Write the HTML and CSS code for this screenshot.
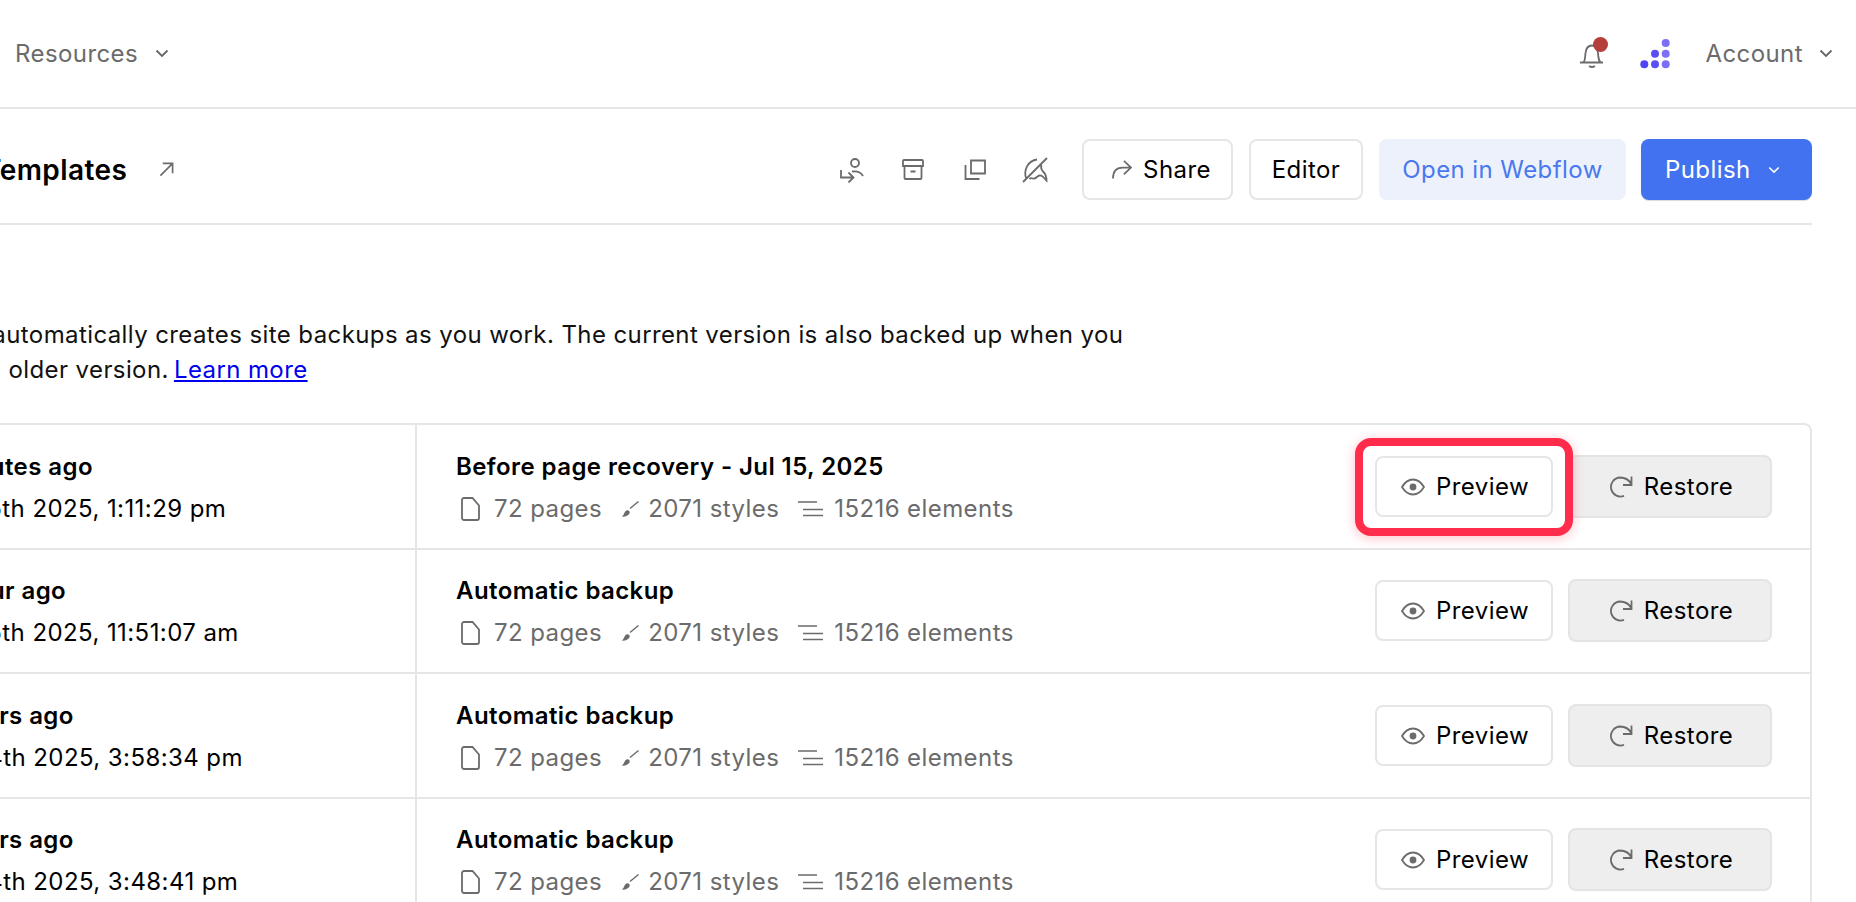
FILE: index.html
```html
<!DOCTYPE html>
<html lang="en">
<head>
<meta charset="utf-8">
<title>Site backups</title>
<link rel="stylesheet" href="styles.css">
</head>
<body>
<svg class="defs" width="0" height="0" aria-hidden="true">
  <symbol id="i-eye" viewBox="0 0 24 18"><path d="M1 9C4 4 8 1.500 12 1.500S20 4 23 9c-3 5-7 7.500-11 7.500S4 14 1 9Z" fill="none" stroke="currentColor" stroke-width="1.800"/><circle cx="12" cy="9" r="3.400" fill="currentColor"/></symbol>
  <symbol id="i-restore" viewBox="0 0 24 22"><path d="M22.500 8.500C20 3.500 15.500 1.500 11 1.500A9.500 9.500 0 1 0 15 19.800M22.500 0.500V9H14" fill="none" stroke="currentColor" stroke-width="1.800"/></symbol>
  <symbol id="i-doc" viewBox="0 0 19 24"><path d="M1 3A2 2 0 0 1 3 1H11.500L18 8.500V21A2 2 0 0 1 16 23H3A2 2 0 0 1 1 21Z" fill="none" stroke="currentColor" stroke-width="1.800"/></symbol>
  <symbol id="i-brush" viewBox="0 0 18 16"><path d="M9 7.500 17.500 0.500" fill="none" stroke="currentColor" stroke-width="1.400"/><path d="M0.500 15.500C3 15 3 10.500 5.500 9.500 7.500 8.800 9.500 10.500 8.500 12.500 7.300 15 3.500 16 0.500 15.500Z" fill="currentColor"/></symbol>
  <symbol id="i-lines" viewBox="0 0 25 16"><path d="M0 1H19M5 8.500H25M5 14.500H25" fill="none" stroke="currentColor" stroke-width="1.500"/></symbol>
  <symbol id="i-chev" viewBox="0 0 14 9"><path d="M1.500 1.500 7 7l5.500-5.500" fill="none" stroke="currentColor" stroke-width="1.800"/></symbol>
</svg>

<header class="topbar">
  <nav class="topnav"><span class="navtext">Resources</span><svg class="chev"><use href="#i-chev"/></svg></nav>
  <div class="topright">
    <span class="bell">
      <svg class="bell-svg" viewBox="0 0 26 26"><path d="M1 20.500H24M4.500 20.500C6.500 18 6 15 6.500 11 7 6.500 9.500 3.500 13 3.500 16.500 3.500 18.500 6.500 19 11 19.500 15 19 18 21.500 20.500M10 24Q13 26 16 24" fill="none" stroke="currentColor" stroke-width="1.800"/></svg>
      <span class="bell-dot"></span>
    </span>
    <svg class="logo" viewBox="0 0 30 30"><circle cx="4.300" cy="25.300" r="4" fill="#4f45f2"/><circle cx="15" cy="25.300" r="4" fill="#5a4ff5"/><circle cx="25.700" cy="25.300" r="4" fill="#7b70f5"/><circle cx="15" cy="14.700" r="4" fill="#5a4ff5"/><circle cx="25.700" cy="14.700" r="4" fill="#7b70f5"/><circle cx="25.700" cy="4" r="4" fill="#7b70f5"/></svg>
    <span class="navtext account">Account</span>
    <svg class="chev"><use href="#i-chev"/></svg>
  </div>
</header>

<main class="main">
  <section class="subhead">
    <div class="crumb">
      <h1 class="title">Templates</h1>
      <svg class="ext" viewBox="0 0 16 16"><path d="M1.500 14.500 14 2M4 1.500H14.500V12" fill="none" stroke="currentColor" stroke-width="1.800"/></svg>
    </div>
    <div class="actions">
      <div class="iconset">
        <svg class="ic ic-swap" viewBox="0 0 24 26"><circle cx="15" cy="6" r="4" fill="none" stroke="currentColor" stroke-width="1.800"/><path d="M12 14.500Q20 13.500 23 19M1 13V20.500H13.500M8.500 15.500 13.500 20.500 8.500 25.500" fill="none" stroke="currentColor" stroke-width="1.800"/></svg>
        <svg class="ic ic-box" viewBox="0 0 22 21"><path d="M1 2A1 1 0 0 1 2 1H20A1 1 0 0 1 21 2V7H1ZM2.500 7V19A1 1 0 0 0 3.500 20H18.500A1 1 0 0 0 19.500 19V7M8.500 12.500H13.500" fill="none" stroke="currentColor" stroke-width="1.800"/></svg>
        <svg class="ic ic-copy" viewBox="0 0 22 21"><path d="M7 1.500H21V14.500H7ZM1.500 6V20H15.500" fill="none" stroke="currentColor" stroke-width="1.800"/></svg>
        <svg class="ic ic-feather" viewBox="0 0 26 26"><path d="M1 25 25 1M4 21C1.500 13 6 3.500 15 2.500M19.500 8C18.500 11 19.500 13 21.500 15 23.500 17 24.500 20 24.500 23.500 22.500 21.500 20.500 18 17.500 18.500 14.500 19 14 22.500 11 21.500 9.500 21 8.500 21 7.500 22" fill="none" stroke="currentColor" stroke-width="1.800"/></svg>
      </div>
      <a class="btn btn-line share"><svg class="share-ic" viewBox="0 0 21 20"><path d="M1 19.500C1 12 4 8 11 8H20M12.500 1 20 8l-7.500 7" fill="none" stroke="currentColor" stroke-width="1.800"/></svg>Share</a>
      <a class="btn btn-line editor">Editor</a>
      <a class="btn btn-soft">Open in Webflow</a>
      <a class="btn btn-primary">Publish<svg class="chev chev-w"><use href="#i-chev"/></svg></a>
    </div>
  </section>

  <p class="intro">Webflow automatically creates site backups as you work. The current version is also backed up when you restore an older version. <a class="learn" href="#">Learn more</a></p>

  <section class="table">
    <article class="row">
      <div class="when"><div class="strong">5 minutes ago</div><div class="plain">Jul 15th 2025, 1:11:29 pm</div></div>
      <div class="what"><div class="strong">Before page recovery - Jul 15, 2025</div>
        <div class="meta"><svg class="m-doc"><use href="#i-doc"/></svg><span>72 pages</span><svg class="m-brush"><use href="#i-brush"/></svg><span>2071 styles</span><svg class="m-lines"><use href="#i-lines"/></svg><span>15216 elements</span></div></div>
      <div class="btns">
        <span class="focus"><span class="ring"></span><a class="btn btn-line preview"><svg class="eye"><use href="#i-eye"/></svg>Preview</a></span>
        <a class="btn btn-grey"><svg class="rest"><use href="#i-restore"/></svg>Restore</a>
      </div>
    </article>
    <article class="row">
      <div class="when"><div class="strong">an hour ago</div><div class="plain">Jul 15th 2025, 11:51:07 am</div></div>
      <div class="what"><div class="strong">Automatic backup</div>
        <div class="meta"><svg class="m-doc"><use href="#i-doc"/></svg><span>72 pages</span><svg class="m-brush"><use href="#i-brush"/></svg><span>2071 styles</span><svg class="m-lines"><use href="#i-lines"/></svg><span>15216 elements</span></div></div>
      <div class="btns">
        <a class="btn btn-line preview"><svg class="eye"><use href="#i-eye"/></svg>Preview</a>
        <a class="btn btn-grey"><svg class="rest"><use href="#i-restore"/></svg>Restore</a>
      </div>
    </article>
    <article class="row">
      <div class="when"><div class="strong ago-hrs">4 hours ago</div><div class="plain">Jul 14th 2025, 3:58:34 pm</div></div>
      <div class="what"><div class="strong">Automatic backup</div>
        <div class="meta"><svg class="m-doc"><use href="#i-doc"/></svg><span>72 pages</span><svg class="m-brush"><use href="#i-brush"/></svg><span>2071 styles</span><svg class="m-lines"><use href="#i-lines"/></svg><span>15216 elements</span></div></div>
      <div class="btns">
        <a class="btn btn-line preview"><svg class="eye"><use href="#i-eye"/></svg>Preview</a>
        <a class="btn btn-grey"><svg class="rest"><use href="#i-restore"/></svg>Restore</a>
      </div>
    </article>
    <article class="row">
      <div class="when"><div class="strong ago-hrs">4 hours ago</div><div class="plain">Jul 14th 2025, 3:48:41 pm</div></div>
      <div class="what"><div class="strong">Automatic backup</div>
        <div class="meta"><svg class="m-doc"><use href="#i-doc"/></svg><span>72 pages</span><svg class="m-brush"><use href="#i-brush"/></svg><span>2071 styles</span><svg class="m-lines"><use href="#i-lines"/></svg><span>15216 elements</span></div></div>
      <div class="btns">
        <a class="btn btn-line preview"><svg class="eye"><use href="#i-eye"/></svg>Preview</a>
        <a class="btn btn-grey"><svg class="rest"><use href="#i-restore"/></svg>Restore</a>
      </div>
    </article>
  </section>
</main>
</body>
</html>
```
FILE: styles.css
```css
* { box-sizing: border-box; }
html, body { margin: 0; height: 902px; overflow: hidden; background: #fff; }
body { font-family: Inter, "Liberation Sans", sans-serif; font-size: 24px; letter-spacing: .42px; color: #000; }
.defs { position: absolute; }

.topbar { height: 109px; border-bottom: 2px solid #e6e6e6; display: flex; align-items: center; justify-content: space-between; padding: 0 23px 0 15px; }
.topnav, .topright { display: flex; align-items: center; }
.navtext { color: #6b6b6b; line-height: 32px; }
.chev { width: 14px; height: 9px; color: #666; flex: none; }
.topnav .chev { margin-left: 17px; }
.topright .chev { margin-left: 16px; }
.bell { position: relative; display: block; width: 26px; height: 26px; color: #6b6b6b; margin-top: 2px; }
.bell-svg { display: block; width: 26px; height: 26px; }
.bell-dot { position: absolute; width: 15px; height: 15px; border-radius: 50%; background: #b5403b; top: -5px; left: 14px; }
.logo { width: 30px; height: 30px; margin-left: 35px; }
.account { margin-left: 35px; }

.main { margin: 0 44px 0 -108px; }
.subhead { height: 116px; padding-top: 7px; border-bottom: 2px solid #e6e6e6; display: flex; align-items: center; justify-content: space-between; }
.crumb { display: flex; align-items: center; padding-left: 91px; }
.title { margin: 0; font-size: 28px; font-weight: 600; line-height: 34px; }
.ext { width: 15px; height: 15px; color: #6b6b6b; margin-left: 32px; }
.actions { display: flex; align-items: center; gap: 16px; }
.iconset { display: flex; align-items: center; margin-right: 18px; color: #6b6b6b; }
.ic { display: block; flex: none; }
.ic-swap { width: 24px; height: 26px; margin-right: 38px; }
.ic-box { width: 22px; height: 21px; margin-right: 40px; }
.ic-copy { width: 22px; height: 21px; margin-right: 36px; }
.ic-feather { width: 26px; height: 26px; }

.btn { display: flex; align-items: center; justify-content: center; height: 61px; border-radius: 8px; line-height: 32px; white-space: nowrap; color: #000; text-decoration: none; }
.btn-line { background: #fff; border: 2px solid #e6e6e6; }
.share { width: 151px; padding-left: 8px; gap: 11px; }
.share-ic { width: 20px; height: 19px; color: #6b6b6b; }
.editor { width: 114px; }
.btn-soft { width: 247px; background: #edf1fc; color: #4a78ee; }
.btn-primary { width: 171px; margin-left: -1px; justify-content: flex-start; padding-left: 24px; background: #4272ef; color: #fff; gap: 17px; box-shadow: 0 1px 1px rgba(0,0,0,.15); }
.chev-w { color: #fff; width: 12px; height: 8px; }

.intro { margin: 92px 0 0 -9px; width: 1280px; line-height: 35px; letter-spacing: .4px; color: #111; }
.learn { margin-left: -2px; color: #0000ee; text-decoration: underline; }

.table { margin-top: 36px; border: 2px solid #e6e6e6; border-bottom: 0; border-radius: 8px 8px 0 0; }
.row { height: 124.500px; display: grid; grid-template-columns: 523px 1fr auto; border-bottom: 2px solid #e6e6e6; }
.when { padding: 20.500px 0 0 41px; border-right: 2px solid #e6e6e6; }
.what { padding: 20.500px 0 0 39px; }
.strong { font-weight: 600; line-height: 42px; }
.when .strong { margin-left: -11px; }
.when .ago-hrs { margin-left: -4px; }
.plain { line-height: 42px; }
.meta { display: flex; align-items: center; line-height: 42px; color: #6b6b6b; }
.m-doc { width: 19px; height: 24px; margin-left: 5px; margin-right: 14px; }
.m-brush { width: 18px; height: 16px; margin-left: 19px; margin-right: 9px; }
.m-lines { width: 25px; height: 16px; margin-left: 19px; margin-right: 11px; }

.btns { display: flex; align-items: center; gap: 15px; padding-right: 38px; }
.focus { position: relative; display: block; }
.ring { position: absolute; left: -20px; right: -20px; top: -18px; bottom: -19px; background: #fff; border: 8px solid #ff2d4b; border-radius: 16px; box-shadow: 0 2px 12px rgba(255,45,75,.3); z-index: 1; }
.preview { position: relative; z-index: 2; width: 178px; gap: 11px; padding: 1px 0 0 2px; }
.eye { width: 24px; height: 18px; color: #6b6b6b; }
.btn-grey { width: 204px; height: 63px; padding: 1px 0 0 2px; background: #eeeeee; border: 2px solid #e4e4e4; gap: 11px; }
.rest { width: 24px; height: 22px; color: #6b6b6b; }
```
